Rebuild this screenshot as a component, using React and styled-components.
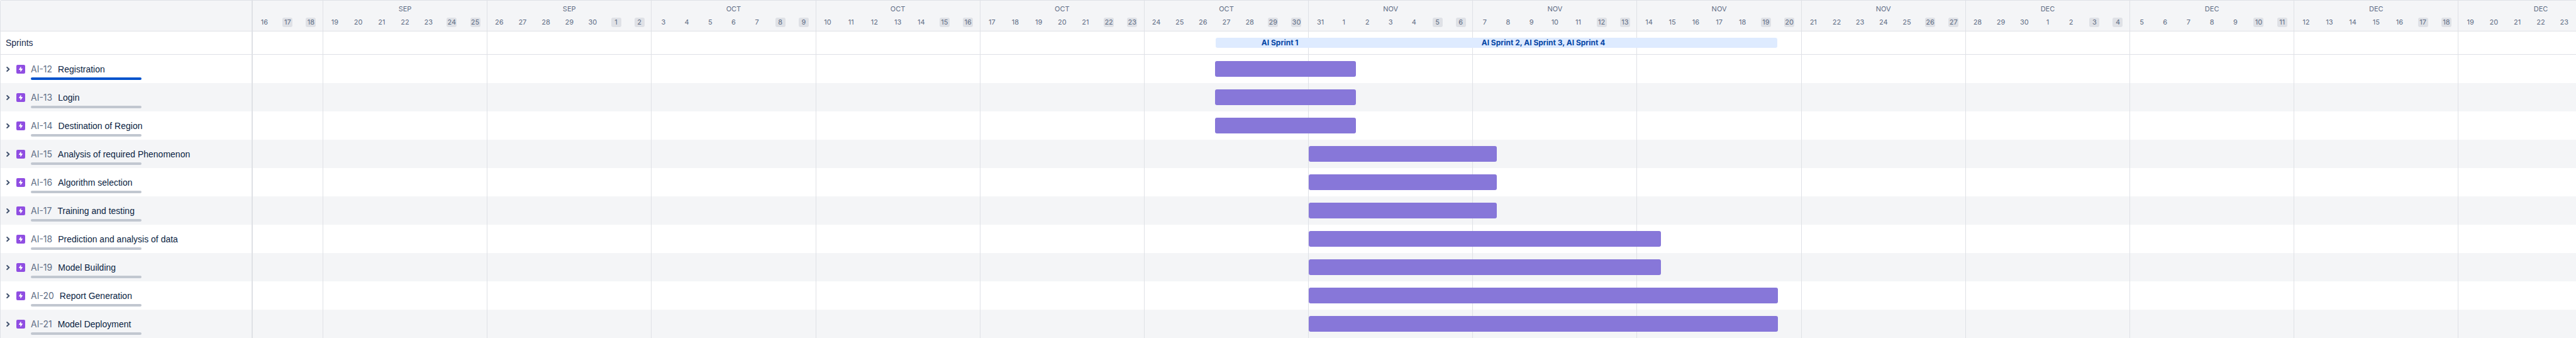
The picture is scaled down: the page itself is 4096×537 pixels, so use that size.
import React from "react";
import styled, { createGlobalStyle } from "styled-components";

const color = {
  line: "#dfe1e6",
  surface: "#ffffff",
  sunken: "#f4f5f7",
  text: "#172b4d",
  textStrong: "#091e42",
  subtle: "#5e6c84",
  key: "#626f86",
  epic: "#904ee2",
  bar: "#8777d9",
  sprint: "#deebff",
  sprintText: "#0747a6",
  done: "#0052cc",
  todo: "#c1c7d0",
};

const GlobalStyle = createGlobalStyle`
  *, *::before, *::after { box-sizing: border-box; }
  body {
    margin: 0;
    background: ${color.surface};
    font-family: "Liberation Sans", Arial, sans-serif;
    font-size: 14px;
    color: ${color.text};
  }
`;

// Timeline runs from 16 September to 23 December 2022.
const DAY_COUNT = 99;
const FIRST_DAY = Date.UTC(2022, 8, 16);
const MONTHS = ["JAN", "FEB", "MAR", "APR", "MAY", "JUN", "JUL", "AUG", "SEP", "OCT", "NOV", "DEC"];

const days = Array.from({ length: DAY_COUNT }, (_, i) => {
  const date = new Date(FIRST_DAY + i * 86400000);
  return { number: date.getUTCDate(), month: MONTHS[date.getUTCMonth()], weekday: date.getUTCDay() };
});

const weeks = days.reduce((list, day) => {
  if (day.weekday === 1 || list.length === 0) list.push([]);
  list[list.length - 1].push(day);
  return list;
}, []);

const issues = [
  { key: "AI-12", summary: "Registration", start: 41, end: 47, done: true },
  { key: "AI-13", summary: "Login", start: 41, end: 47 },
  { key: "AI-14", summary: "Destination of Region", start: 41, end: 47 },
  { key: "AI-15", summary: "Analysis of required Phenomenon", start: 45, end: 53 },
  { key: "AI-16", summary: "Algorithm selection", start: 45, end: 53 },
  { key: "AI-17", summary: "Training and testing", start: 45, end: 53 },
  { key: "AI-18", summary: "Prediction and analysis of data", start: 45, end: 60 },
  { key: "AI-19", summary: "Model Building", start: 45, end: 60 },
  { key: "AI-20", summary: "Report Generation", start: 45, end: 65 },
  { key: "AI-21", summary: "Model Deployment", start: 45, end: 65 },
];

const Roadmap = styled.main`
  display: flex;
  flex-direction: column;
  border-top: 1px solid ${color.line};
  border-left: 1px solid ${color.line};
  border-top-left-radius: 3px;
  overflow: hidden;
`;

const Row = styled.div`
  display: grid;
  grid-template-columns: 401px minmax(0, 1fr);
  height: ${(p) => p.$height}px;
  background: ${(p) => (p.$shaded ? color.sunken : color.surface)};
  border-bottom: ${(p) => (p.$ruled ? `1px solid ${color.line}` : "0")};
`;

const SideCell = styled.div`
  display: flex;
  align-items: center;
  padding-left: 8px;
  border-right: 2px solid ${color.line};
`;

const Track = styled.div`
  display: grid;
  grid-template-columns: repeat(${DAY_COUNT}, minmax(0, 1fr));
  grid-template-rows: minmax(0, 1fr);
  min-width: 0;
`;

const Week = styled.div`
  grid-row: 1;
  grid-column: ${(p) => p.$start + 1} / span ${(p) => p.$length};
  border-right: ${(p) => (p.$last ? "0" : `1px solid ${color.line}`)};
`;

const HeaderWeek = styled(Week)`
  display: grid;
  grid-template-columns: repeat(${(p) => p.$length}, minmax(0, 1fr));
  grid-template-rows: 16px 15px;
  row-gap: 6px;
  padding-top: 5px;
  justify-items: center;
  font-family: Inter, "Liberation Sans", sans-serif;
  font-size: 11px;
  color: ${color.subtle};
`;

const MonthLabel = styled.span`
  grid-row: 1;
  grid-column: 4;
  line-height: 16px;
`;

const DayLabel = styled.span`
  grid-row: 2;
  width: 16px;
  line-height: 15px;
  display: flex;
  justify-content: center;
  border-radius: 3px;
  background: ${(p) => (p.$weekend ? color.line : "transparent")};
`;

const SprintBar = styled.div`
  grid-row: 1;
  grid-column: 42 / 66;
  align-self: center;
  display: grid;
  grid-template-columns: repeat(48, minmax(0, 1fr));
  height: 16px;
  margin: 0 1px;
  border-radius: 3px;
  background: ${color.sprint};
  color: ${color.sprintText};
  font: 700 12px/16px Inter, "Liberation Sans", sans-serif;
`;

const SprintName = styled.span`
  grid-row: 1;
  grid-column: ${(p) => p.$from} / ${(p) => p.$to};
  text-align: center;
  white-space: nowrap;
`;

const IssueBar = styled.div`
  grid-row: 1;
  grid-column: ${(p) => p.$start + 1} / ${(p) => p.$end + 1};
  margin: 10px 0;
  border-radius: 3px;
  background: ${color.bar};
`;

const Toggle = styled.button`
  display: flex;
  align-items: center;
  justify-content: center;
  width: 8px;
  height: 14px;
  margin-right: 9px;
  padding: 0;
  border: 0;
  background: none;
  color: #42526e;
`;

const EpicIcon = styled.svg`
  flex: none;
  width: 14px;
  height: 14px;
  margin-right: 9px;
`;

const IssueBody = styled.div`
  display: flex;
  flex-direction: column;
  gap: 3px;
  padding: 13px 0 5px;
`;

const IssueTitle = styled.div`
  display: flex;
  gap: 9px;
  line-height: 20px;
  white-space: nowrap;
`;

const IssueKey = styled.a`
  font-family: Inter, "Liberation Sans", sans-serif;
  color: ${color.key};
  text-decoration: none;
`;

const Summary = styled.span`
  color: ${color.textStrong};
`;

const Progress = styled.div`
  width: 176px;
  height: 4px;
  border-radius: 2px;
  background: ${(p) => (p.$done ? color.done : color.todo)};
`;

function weekSpans() {
  let start = 0;
  return weeks.map((list, i) => {
    const span = { start, length: list.length, days: list, last: i === weeks.length - 1 };
    start += list.length;
    return span;
  });
}

const spans = weekSpans();

function WeekLines() {
  return spans.map((w) => <Week key={w.start} $start={w.start} $length={w.length} $last={w.last} />);
}

function Chevron() {
  return (
    <svg width="8" height="10" viewBox="0 0 8 10" fill="none" aria-hidden="true">
      <path d="M2.200 2 5.400 5 2.200 8" stroke="currentColor" strokeWidth="2" strokeLinecap="round" strokeLinejoin="round" />
    </svg>
  );
}

function Epic() {
  return (
    <EpicIcon viewBox="0 0 28 28" role="img" aria-label="Epic">
      <rect width="28" height="28" rx="4" fill={color.epic} />
      <path
        d="M13.600 6.300 8.100 14.800C7.800 15.400 8.100 16 8.800 16H12.700V21.200C12.700 22.200 13.700 22.400 14.200 21.700L19.800 13.300C20.200 12.700 19.800 12 19.100 12H15V6.700C15 5.900 14.100 5.600 13.600 6.300Z"
        fill="#fff"
      />
    </EpicIcon>
  );
}

function HeaderRow() {
  return (
    <Row $height={49} $shaded $ruled>
      <SideCell />
      <Track>
        {spans.map((w) => (
          <HeaderWeek key={w.start} $start={w.start} $length={w.length} $last={w.last}>
            {w.days.length > 3 && <MonthLabel>{w.days[3].month}</MonthLabel>}
            {w.days.map((d) => (
              <DayLabel key={d.number} $weekend={d.weekday === 0 || d.weekday === 6}>
                {d.number}
              </DayLabel>
            ))}
          </HeaderWeek>
        ))}
      </Track>
    </Row>
  );
}

function SprintRow() {
  return (
    <Row $height={37} $ruled>
      <SideCell>Sprints</SideCell>
      <Track>
        <WeekLines />
        <SprintBar>
          <SprintName $from={1} $to={12}>AI Sprint 1</SprintName>
          <SprintName $from={9} $to={49}>AI Sprint 2, AI Sprint 3, AI Sprint 4</SprintName>
        </SprintBar>
      </Track>
    </Row>
  );
}

function IssueRow({ issue, shaded }) {
  return (
    <Row $height={45} $shaded={shaded}>
      <SideCell>
        <Toggle type="button" aria-label={`Expand ${issue.key}`}>
          <Chevron />
        </Toggle>
        <Epic />
        <IssueBody>
          <IssueTitle>
            <IssueKey href={`#${issue.key}`}>{issue.key}</IssueKey>
            <Summary>{issue.summary}</Summary>
          </IssueTitle>
          <Progress $done={issue.done} />
        </IssueBody>
      </SideCell>
      <Track>
        <WeekLines />
        <IssueBar $start={issue.start} $end={issue.end} />
      </Track>
    </Row>
  );
}

export default function App() {
  return (
    <>
      <GlobalStyle />
      <Roadmap>
        <HeaderRow />
        <SprintRow />
        {issues.map((issue, i) => (
          <IssueRow key={issue.key} issue={issue} shaded={i % 2 === 1} />
        ))}
      </Roadmap>
    </>
  );
}
